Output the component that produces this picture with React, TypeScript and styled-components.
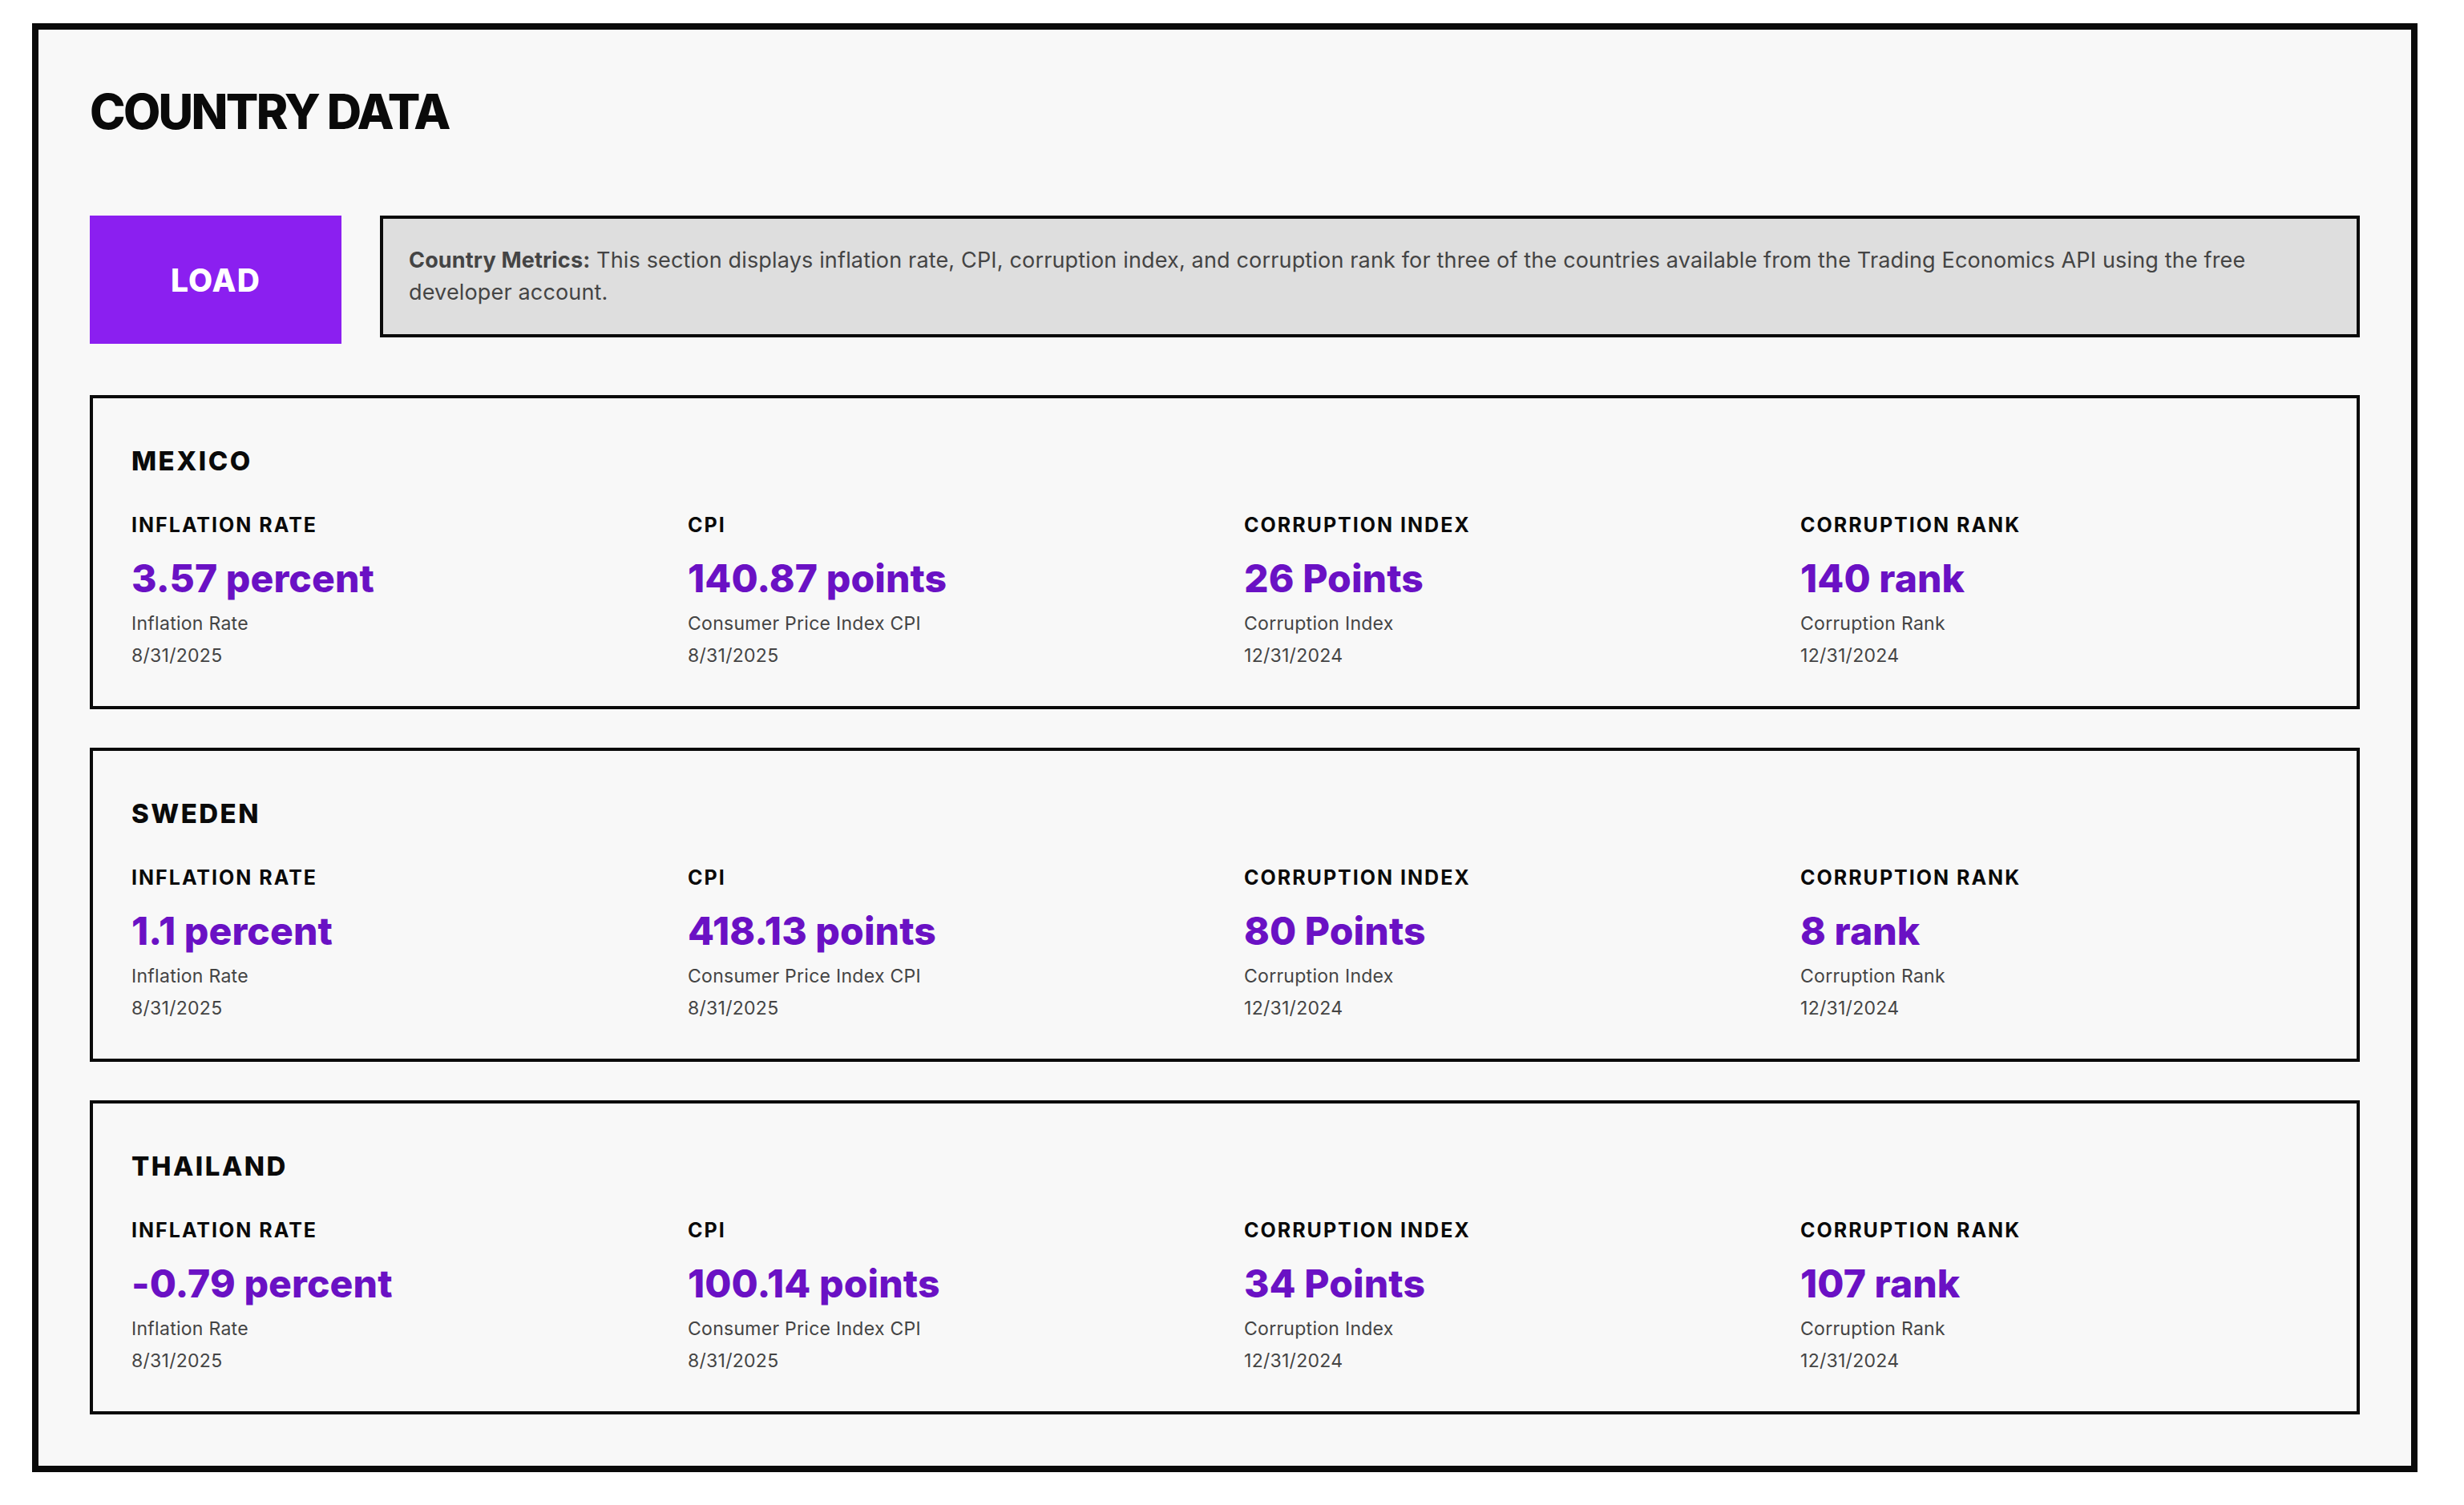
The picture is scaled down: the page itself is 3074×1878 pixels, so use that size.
import React, { FC } from "react";
import styled, { createGlobalStyle } from "styled-components";

const GlobalStyle = createGlobalStyle`
  html, body {
    margin: 0;
    padding: 0;
    background: #ffffff;
  }
  body {
    font-family: Inter, "Noto Sans", "Liberation Sans", sans-serif;
    color: #0a0a0a;
  }
  * {
    box-sizing: border-box;
  }
`;

const StyledPage = styled.div`
  padding: 29px 0 40px 40px;
`;

const StyledFrame = styled.main`
  width: 2976px;
  border: 8px solid #0a0a0a;
  background-color: #f8f8f8;
  padding: 64px;
  display: flex;
  flex-direction: column;
`;

const StyledTitle = styled.h1`
  margin: 2px 0 94px;
  font-size: 60px;
  line-height: 72px;
  font-weight: 800;
  letter-spacing: -0.045em;
  color: #0a0a0a;
`;

const StyledToolbar = styled.div`
  display: flex;
  align-items: flex-start;
  gap: 48px;
`;

const StyledLoadButton = styled.button`
  flex: 0 0 314px;
  height: 160px;
  border: none;
  background-color: #8b1ff0;
  color: #ffffff;
  font-family: inherit;
  font-size: 39px;
  font-weight: 800;
  letter-spacing: 0.03em;
  cursor: pointer;
`;

const StyledNote = styled.p`
  flex: 1;
  margin: 0;
  border: 4px solid #0a0a0a;
  background-color: #dedede;
  padding: 32px;
  font-size: 27px;
  line-height: 40px;
  letter-spacing: 0.006em;
  color: #444444;

  strong {
    font-weight: 700;
  }
`;

const StyledCardList = styled.div`
  margin-top: 64px;
  display: flex;
  flex-direction: column;
  gap: 48px;
`;

const StyledCard = styled.section`
  border: 4px solid #0a0a0a;
  padding: 56px 48px 43px;
`;

const StyledCountryName = styled.h2`
  margin: 0 0 42px;
  font-size: 33px;
  line-height: 44px;
  font-weight: 800;
  letter-spacing: 0.075em;
`;

const StyledMetricGrid = styled.div`
  display: grid;
  grid-template-columns: repeat(4, 1fr);
  gap: 48px;
`;

const StyledMetric = styled.div`
  display: flex;
  flex-direction: column;
`;

const StyledMetricLabel = styled.div`
  margin-bottom: 21px;
  font-size: 25px;
  line-height: 32px;
  font-weight: 700;
  letter-spacing: 0.08em;
`;

const StyledMetricValue = styled.div`
  margin-bottom: 6px;
  font-size: 48px;
  line-height: 60px;
  font-weight: 800;
  letter-spacing: 0.002em;
  color: #6a11c4;
`;

const StyledMetricMeta = styled.div`
  font-size: 23px;
  line-height: 40px;
  letter-spacing: 0.012em;
  color: #444444;
`;

interface IMetric {
  label: string;
  value: string;
  name: string;
  date: string;
}

interface ICountry {
  name: string;
  metrics: IMetric[];
}

const countries: ICountry[] = [
  {
    name: "MEXICO",
    metrics: [
      { label: "INFLATION RATE", value: "3.57 percent", name: "Inflation Rate", date: "8/31/2025" },
      { label: "CPI", value: "140.87 points", name: "Consumer Price Index CPI", date: "8/31/2025" },
      { label: "CORRUPTION INDEX", value: "26 Points", name: "Corruption Index", date: "12/31/2024" },
      { label: "CORRUPTION RANK", value: "140 rank", name: "Corruption Rank", date: "12/31/2024" },
    ],
  },
  {
    name: "SWEDEN",
    metrics: [
      { label: "INFLATION RATE", value: "1.1 percent", name: "Inflation Rate", date: "8/31/2025" },
      { label: "CPI", value: "418.13 points", name: "Consumer Price Index CPI", date: "8/31/2025" },
      { label: "CORRUPTION INDEX", value: "80 Points", name: "Corruption Index", date: "12/31/2024" },
      { label: "CORRUPTION RANK", value: "8 rank", name: "Corruption Rank", date: "12/31/2024" },
    ],
  },
  {
    name: "THAILAND",
    metrics: [
      { label: "INFLATION RATE", value: "-0.79 percent", name: "Inflation Rate", date: "8/31/2025" },
      { label: "CPI", value: "100.14 points", name: "Consumer Price Index CPI", date: "8/31/2025" },
      { label: "CORRUPTION INDEX", value: "34 Points", name: "Corruption Index", date: "12/31/2024" },
      { label: "CORRUPTION RANK", value: "107 rank", name: "Corruption Rank", date: "12/31/2024" },
    ],
  },
];

const CountryCard: FC<ICountry> = ({ name, metrics }: ICountry) => (
  <StyledCard>
    <StyledCountryName>{name}</StyledCountryName>
    <StyledMetricGrid>
      {metrics.map((metric) => (
        <StyledMetric key={metric.label}>
          <StyledMetricLabel>{metric.label}</StyledMetricLabel>
          <StyledMetricValue>{metric.value}</StyledMetricValue>
          <StyledMetricMeta>{metric.name}</StyledMetricMeta>
          <StyledMetricMeta>{metric.date}</StyledMetricMeta>
        </StyledMetric>
      ))}
    </StyledMetricGrid>
  </StyledCard>
);

const App: FC = () => (
  <StyledPage>
    <GlobalStyle />
    <StyledFrame>
      <StyledTitle>COUNTRY DATA</StyledTitle>
      <StyledToolbar>
        <StyledLoadButton type="button">LOAD</StyledLoadButton>
        <StyledNote>
          <strong>Country Metrics:</strong> This section displays inflation rate, CPI,
          corruption index, and corruption rank for three of the countries available from
          the Trading Economics API using the free developer account.
        </StyledNote>
      </StyledToolbar>
      <StyledCardList>
        {countries.map((country) => (
          <CountryCard key={country.name} {...country} />
        ))}
      </StyledCardList>
    </StyledFrame>
  </StyledPage>
);

export default App;
